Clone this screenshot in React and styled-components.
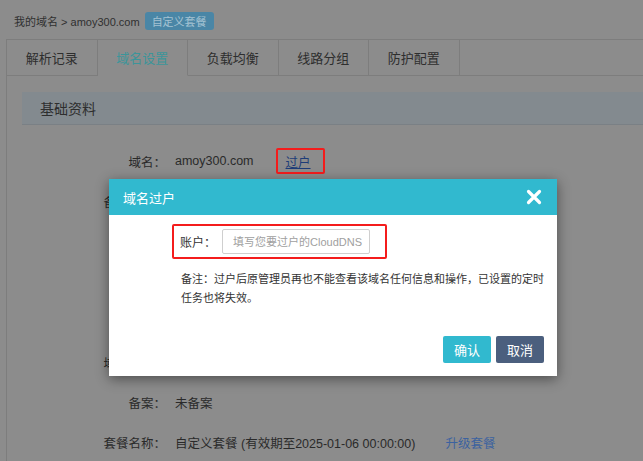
import React from 'react';
import styled, { createGlobalStyle } from 'styled-components';

const GlobalStyle = createGlobalStyle`
  html, body {
    margin: 0;
    padding: 0;
    background: #8c8c8c;
    font-family: "Liberation Sans", "Noto Sans CJK SC", Arial, sans-serif;
    color: #2c2c2c;
    overflow: hidden;
  }
`;

const Page = styled.div`
  position: relative;
  width: 643px;
  height: 461px;
  overflow: hidden;
`;

const Breadcrumb = styled.div`
  display: flex;
  align-items: center;
  height: 18px;
  padding: 12px 0 0 14px;
  font-size: 11px;
  color: #303030;
`;

const Badge = styled.span`
  display: inline-flex;
  align-items: center;
  height: 18px;
  margin-left: 5px;
  padding: 0 7px;
  border-radius: 3px;
  background: #4a86a6;
  color: #a4c2d2;
  font-size: 11px;
`;

const Frame = styled.div`
  margin: 9px 0 0 6px;
  border-left: 1px solid #7d7d7d;
  height: 430px;
`;

const TabBar = styled.div`
  display: flex;
  height: 36px;
  border-top: 1px solid #7d7d7d;
`;

const Tab = styled.div`
  width: 89.5px;
  display: flex;
  align-items: center;
  justify-content: center;
  font-size: 13px;
  color: ${({ active }) => (active ? '#3c959a' : '#2e2e2e')};
  border-right: 1px solid #7d7d7d;
  border-bottom: 1px solid ${({ active }) => (active ? 'transparent' : '#7d7d7d')};
`;

const TabFiller = styled.div`
  flex: 1;
  border-bottom: 1px solid #7d7d7d;
`;

const Panel = styled.div`
  padding: 16px 0 0 15px;
`;

const SectionTitle = styled.div`
  height: 32px;
  display: flex;
  align-items: center;
  padding-left: 18px;
  background: #838a8f;
  border-bottom: 1px solid #7a8085;
  font-size: 14px;
  color: #2e2e2e;
`;

const Rows = styled.div`
  padding-top: 16px;
`;

const Row = styled.div`
  display: flex;
  align-items: center;
  height: 40.2px;
  font-size: 12.5px;
  font-family: "Liberation Sans", "Noto Sans CJK SC", sans-serif;
`;

const Label = styled.div`
  width: 144px;
  text-align: right;
  color: #2a2a2a;
`;

const Value = styled.div`
  margin-left: 9px;
  color: #2a2a2a;
`;

const Marked = styled.span`
  display: inline-flex;
  align-items: center;
  height: 22px;
  margin-left: 22px;
  padding: 0 12px 0 8px;
  border: 2px solid #f41c1c;
  border-radius: 2px;
`;

const Link = styled.a`
  color: ${({ underline }) => (underline ? '#1d3c78' : '#3b62a0')};
  text-decoration: ${({ underline }) => (underline ? 'underline' : 'none')};
  margin-left: ${({ gap }) => gap || 0}px;
  cursor: pointer;
`;

const Dialog = styled.div`
  position: absolute;
  left: 109px;
  top: 179px;
  width: 448px;
  height: 197px;
  background: #fff;
  box-shadow: 0 3px 12px rgba(0, 0, 0, 0.45);
  display: flex;
  flex-direction: column;
  font-family: "Liberation Sans", "Noto Sans CJK SC", sans-serif;
`;

const DialogHeader = styled.div`
  height: 36px;
  display: flex;
  align-items: center;
  justify-content: space-between;
  padding: 0 15px 0 14px;
  background: #31b9cf;
  color: #fff;
  font-size: 13px;
`;

const DialogBody = styled.div`
  flex: 1;
  padding: 9px 13px 13px 63px;
  display: flex;
  flex-direction: column;
`;

const FieldBox = styled.div`
  display: flex;
  align-items: center;
  width: 205px;
  height: 31px;
  padding-left: 6px;
  border: 2px solid #f41c1c;
  border-radius: 2px;
  font-size: 12px;
  color: #333;
`;

const Input = styled.input`
  width: 148px;
  height: 25px;
  box-sizing: border-box;
  margin-left: 6px;
  padding: 0 0 0 10px;
  border: 1px solid #cfcfcf;
  border-radius: 2px;
  font-size: 11px;
  font-family: "Liberation Sans", "Noto Sans CJK SC", sans-serif;
  outline: none;
  &::placeholder {
    color: #a0a0a0;
  }
`;

const Note = styled.p`
  margin: 11px 0 0 9px;
  width: 366px;
  font-size: 11px;
  line-height: 19px;
  color: #333;
`;

const Actions = styled.div`
  margin-top: auto;
  display: flex;
  justify-content: flex-end;
  gap: 5px;
`;

const Button = styled.button`
  width: 48px;
  height: 27px;
  border: none;
  border-radius: 2px;
  background: ${({ kind }) => (kind === 'primary' ? '#31b9cf' : '#4b5f7e')};
  color: #fff;
  font-size: 13px;
  font-family: "Liberation Sans", "Noto Sans CJK SC", sans-serif;
  cursor: pointer;
`;

const CloseIcon = () => (
  <svg width="16" height="16" viewBox="0 0 16 16">
    <path d="M2.5 2.5 L13.5 13.5 M13.5 2.5 L2.5 13.5" stroke="#fff" strokeWidth="3.2" strokeLinecap="round" />
  </svg>
);

const tabs = ['解析记录', '域名设置', '负载均衡', '线路分组', '防护配置'];

export default function App() {
  return (
    <Page>
      <GlobalStyle />
      <Breadcrumb>
        我的域名 &gt; amoy300.com
        <Badge>自定义套餐</Badge>
      </Breadcrumb>
      <Frame>
        <TabBar>
          {tabs.map((t) => (
            <Tab key={t} active={t === '域名设置'}>{t}</Tab>
          ))}
          <TabFiller />
        </TabBar>
        <Panel>
          <SectionTitle>基础资料</SectionTitle>
          <Rows>
            <Row>
              <Label>域名：</Label>
              <Value>amoy300.com</Value>
              <Marked><Link underline>过户</Link></Marked>
            </Row>
            <Row><Label>备注信息：</Label><Value>无</Value></Row>
            <Row><Label>分组：</Label><Value>默认分组</Value></Row>
            <Row><Label>创建：</Label><Value>2024-01-06</Value></Row>
            <Row><Label>状态：</Label><Value>正常</Value></Row>
            <Row><Label>域名状态：</Label><Value>正常</Value></Row>
            <Row><Label>备案：</Label><Value>未备案</Value></Row>
            <Row>
              <Label>套餐名称：</Label>
              <Value>自定义套餐 (有效期至2025-01-06 00:00:00)</Value>
              <Link gap={30}>升级套餐</Link>
            </Row>
          </Rows>
        </Panel>
      </Frame>

      <Dialog>
        <DialogHeader>
          域名过户
          <CloseIcon />
        </DialogHeader>
        <DialogBody>
          <FieldBox>
            账户：
            <Input placeholder="填写您要过户的CloudDNS" />
          </FieldBox>
          <Note>
            备注：过户后原管理员再也不能查看该域名任何信息和操作，已设置的定时任务也将失效。
          </Note>
          <Actions>
            <Button kind="primary">确认</Button>
            <Button>取消</Button>
          </Actions>
        </DialogBody>
      </Dialog>
    </Page>
  );
}
